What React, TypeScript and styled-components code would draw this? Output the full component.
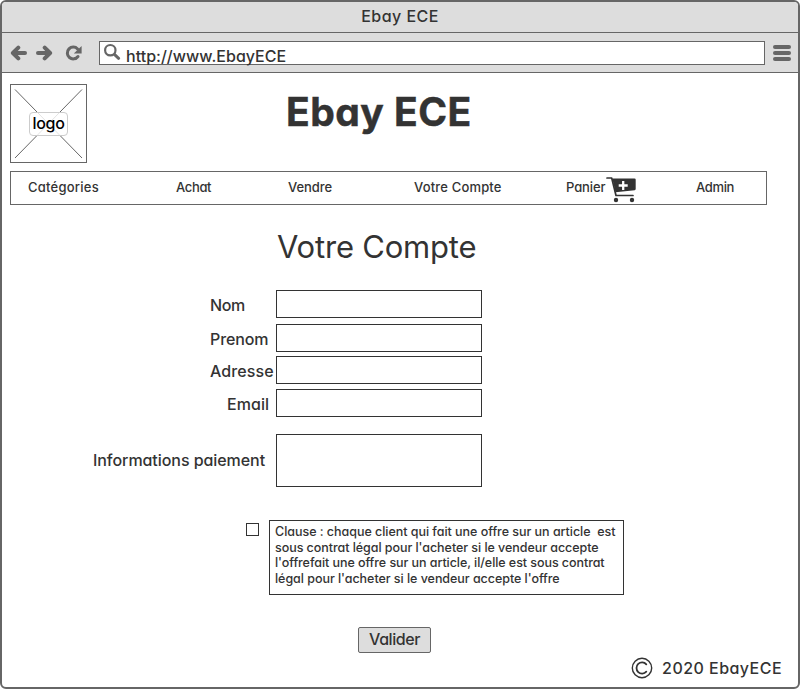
import React from 'react';
import styled, { createGlobalStyle } from 'styled-components';

const GlobalStyle = createGlobalStyle`
  *, *::before, *::after { box-sizing: border-box; }
  body {
    margin: 0;
    background: #fff;
    color: #333;
    font: 500 16px/20px Inter, "Open Sans", sans-serif;
    font-feature-settings: "cv11" 1;
  }
`;

const BrowserWindow = styled.div`
  width: 800px;
  height: 689px;
  display: flex;
  flex-direction: column;
  overflow: hidden;
  border: 2px solid #666;
  border-radius: 6px;
  background: #fff;
`;

const TitleBar = styled.header`
  height: 31px;
  flex: none;
  padding-top: 4px;
  text-align: center;
  letter-spacing: 0.45px;
  border-bottom: 1px solid #666;
  background: #ddd;
`;

const Toolbar = styled.div`
  height: 40px;
  flex: none;
  display: flex;
  align-items: center;
  padding: 0 7px 0 8px;
  border-bottom: 1px solid #666;
  background: #ddd;
`;

const NavIcons = styled.div`
  display: flex;
  align-items: center;
  width: 89px;
  gap: 9px;

  svg:last-child { margin-left: 3px; }
`;

const AddressBar = styled.div`
  width: 666px;
  height: 24px;
  display: flex;
  padding-left: 4px;
  border: 1px solid #666;
  background: #fff;
`;

const Url = styled.span`
  padding: 4px 0 0 5px;
  letter-spacing: 0.02px;
  white-space: nowrap;
`;

const MenuButton = styled.div`
  display: flex;
  flex-direction: column;
  gap: 2px;
  margin-left: auto;
`;

const MenuBar = styled.span`
  width: 18px;
  height: 4px;
  border-radius: 2px;
  background: #666;
`;

const Page = styled.main`
  flex: 1;
  display: flex;
  flex-direction: column;
  padding: 11px 0 0 8px;
`;

const Masthead = styled.div`
  display: flex;
  height: 79px;
`;

const Logo = styled.div`
  width: 77px;
  height: 79px;
  display: grid;
  place-items: center;
  border: 1px solid #666;

  > * { grid-area: 1 / 1; }
`;

const LogoLabel = styled.span`
  width: 39px;
  height: 24px;
  text-align: center;
  letter-spacing: -0.3px;
  color: #000;
  border: 1px solid #ccc;
  border-radius: 4px;
  background: rgba(255, 255, 255, 0.82);
`;

const SiteTitle = styled.h1`
  margin: 4px 0 0 199px;
  font-size: 39px;
  line-height: 48px;
  font-weight: 700;
  letter-spacing: 0.5px;
  white-space: nowrap;
  -webkit-text-stroke: 0.5px #333;
`;

const Nav = styled.nav`
  width: 757px;
  height: 34px;
  display: grid;
  grid-template-columns: 148px 112px 126px 152px 130px 1fr;
  margin-top: 8px;
  padding-left: 17px;
  border: 1px solid #666;
  font-size: 13px;
`;

const NavItem = styled.a<{ $spacing?: number }>`
  display: flex;
  padding-top: 5px;
  letter-spacing: ${(p) => p.$spacing ?? 0}px;
  white-space: nowrap;

  svg { margin: -1px 0 0 1px; }
`;

const SectionTitle = styled.h2`
  margin: 23px 0 0 267px;
  font-size: 31px;
  line-height: 37px;
  font-weight: 400;
  letter-spacing: -0.2px;
  white-space: nowrap;
`;

const Form = styled.form`
  display: flex;
  flex-direction: column;
  margin-top: 25px;
`;

const Field = styled.label<{ $height?: number; $gap?: number }>`
  height: ${(p) => p.$height ?? 28}px;
  display: grid;
  grid-template-columns: 266px 206px;
  margin-top: ${(p) => p.$gap ?? 0}px;
`;

const FieldLabel = styled.span<{ $indent: number; $spacing?: number; $lift?: number }>`
  align-self: center;
  padding: 2px 0 ${(p) => p.$lift ?? 0}px ${(p) => p.$indent}px;
  letter-spacing: ${(p) => p.$spacing ?? 0}px;
  white-space: nowrap;
`;

const Input = styled.input`
  width: 100%;
  height: 100%;
  padding: 0 6px;
  border: 1px solid #333;
  background: #fff;
  font: inherit;
`;

const TextArea = styled(Input).attrs({ as: 'textarea' })`
  display: block;
  resize: none;
`;

const Consent = styled.label`
  display: flex;
  margin: 33px 0 0 236px;
`;

const Checkbox = styled.input.attrs({ type: 'checkbox' })`
  appearance: none;
  width: 13px;
  height: 13px;
  margin: 3px 10px 0 0;
  border: 1px solid #333;
  background: #fff;
`;

const Clause = styled.p`
  width: 355px;
  height: 75px;
  margin: 0;
  padding: 3px 0 0 5px;
  border: 1px solid #333;
  font-size: 12.5px;
  line-height: 15.6px;
`;

const ClauseLine = styled.span<{ $spacing: number }>`
  display: block;
  letter-spacing: ${(p) => p.$spacing}px;
  white-space: pre;
`;

const Submit = styled.button`
  width: 73px;
  height: 26px;
  margin: 32px 0 0 348px;
  padding: 0 0 2px;
  border: 1px solid #666;
  border-radius: 2px;
  background: #ddd;
  color: inherit;
  font: inherit;
  font-feature-settings: inherit;
  letter-spacing: -0.45px;
`;

const Footer = styled.footer`
  display: flex;
  align-items: center;
  justify-content: flex-end;
  gap: 9px;
  margin: 4px 16px 0 0;
  letter-spacing: 0.46px;
`;

const ArrowIcon = ({ right = false }: { right?: boolean }) => (
  <svg width="17" height="16" viewBox="0 0 17 16" fill="none" stroke="#666" strokeWidth="4" strokeLinejoin="round">
    <g transform={right ? 'matrix(-1 0 0 1 17 0)' : undefined}>
      <path d="M15 8H4" strokeLinecap="round" />
      <path d="M8.3 2.6 2.900 8l5.400 5.400" strokeLinecap="round" />
    </g>
  </svg>
);

const ReloadIcon = () => (
  <svg width="18" height="16" viewBox="0 0 18 16">
    <path d="M13 11.500A5.900 5.900 0 1 1 12.600 4" fill="none" stroke="#666" strokeWidth="3" strokeLinecap="round" />
    <path d="M16.600 1v7.600H8.800z" fill="#666" />
  </svg>
);

const SearchIcon = () => (
  <svg width="17" height="18" viewBox="0 0 17 18" fill="none" stroke="#666">
    <circle cx="6.3" cy="8.2" r="5.2" strokeWidth="2.2" />
    <path d="m10.700 12.700 3.900 3.600" strokeWidth="3" strokeLinecap="round" />
  </svg>
);

const CrossIcon = () => (
  <svg width="75" height="77" viewBox="0 0 75 77" stroke="#666" strokeWidth="1">
    <path d="M4 4.5 71 73M71 4.5 4 73" />
  </svg>
);

const CartIcon = () => (
  <svg width="31" height="27" viewBox="0 0 31 27" fill="#333">
    <path d="M1 2h4.700L10 19.500h17" fill="none" stroke="#333" strokeWidth="1.700" strokeLinecap="round" strokeLinejoin="round" />
    <path d="M6.300 2.500H28.500q1.200 0 1.200 1.200V13q0 1-1 1.200L9.500 16.200z" />
    <circle cx="10" cy="24" r="2.200" />
    <circle cx="26" cy="24" r="2.200" />
    <path d="M17.200 5v9M12.700 9.500h9" stroke="#fff" strokeWidth="2.300" />
  </svg>
);

const CopyrightIcon = () => (
  <svg width="22" height="22" viewBox="0 0 22 22" fill="none" stroke="#333">
    <circle cx="11" cy="11" r="9.700" strokeWidth="1.400" />
    <path d="M15.300 7.300A5.600 5.600 0 1 0 15.300 14.700" strokeWidth="1.800" strokeLinecap="round" />
  </svg>
);

export default function App() {
  return (
    <>
      <GlobalStyle />
      <BrowserWindow>
        <TitleBar>Ebay ECE</TitleBar>
        <Toolbar>
          <NavIcons>
            <ArrowIcon />
            <ArrowIcon right />
            <ReloadIcon />
          </NavIcons>
          <AddressBar>
            <SearchIcon />
            <Url>http://www.EbayECE</Url>
          </AddressBar>
          <MenuButton>
            <MenuBar />
            <MenuBar />
            <MenuBar />
          </MenuButton>
        </Toolbar>
        <Page>
          <Masthead>
            <Logo>
              <CrossIcon />
              <LogoLabel>logo</LogoLabel>
            </Logo>
            <SiteTitle>Ebay ECE</SiteTitle>
          </Masthead>
          <Nav>
            <NavItem $spacing={0.24}>Catégories</NavItem>
            <NavItem $spacing={-0.35}>Achat</NavItem>
            <NavItem $spacing={-0.06}>Vendre</NavItem>
            <NavItem $spacing={0.17}>Votre Compte</NavItem>
            <NavItem $spacing={-0.1}>
              Panier
              <CartIcon />
            </NavItem>
            <NavItem $spacing={-0.35}>Admin</NavItem>
          </Nav>
          <SectionTitle>Votre Compte</SectionTitle>
          <Form>
            <Field>
              <FieldLabel $indent={200} $spacing={-0.4}>Nom</FieldLabel>
              <Input />
            </Field>
            <Field $gap={6}>
              <FieldLabel $indent={200} $spacing={-0.1}>Prenom</FieldLabel>
              <Input />
            </Field>
            <Field $gap={4}>
              <FieldLabel $indent={200} $spacing={0.12}>Adresse</FieldLabel>
              <Input />
            </Field>
            <Field $gap={5}>
              <FieldLabel $indent={217} $spacing={0.05}>Email</FieldLabel>
              <Input />
            </Field>
            <Field $gap={17} $height={53}>
              <FieldLabel $indent={83} $spacing={-0.06} $lift={3}>Informations paiement</FieldLabel>
              <TextArea />
            </Field>
            <Consent>
              <Checkbox />
              <Clause>
                <ClauseLine $spacing={-0.03}>{'Clause : chaque client qui fait une offre sur un article  est'}</ClauseLine>
                <ClauseLine $spacing={-0.05}>sous contrat légal pour l'acheter si le vendeur accepte</ClauseLine>
                <ClauseLine $spacing={-0.06}>l'offrefait une offre sur un article, il/elle est sous contrat</ClauseLine>
                <ClauseLine $spacing={-0.04}>légal pour l'acheter si le vendeur accepte l'offre</ClauseLine>
              </Clause>
            </Consent>
            <Submit type="button">Valider</Submit>
          </Form>
          <Footer>
            <CopyrightIcon />
            2020 EbayECE
          </Footer>
        </Page>
      </BrowserWindow>
    </>
  );
}
